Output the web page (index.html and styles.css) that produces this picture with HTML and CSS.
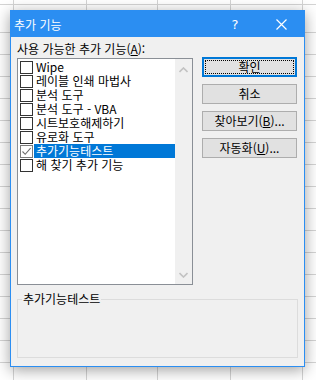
FILE: index.html
```html
<!DOCTYPE html>
<html lang="ko">
<head>
<meta charset="utf-8">
<link rel="stylesheet" href="styles.css">
</head>
<body>
<div class="sheet">
  <div class="dialog">
    <div class="titlebar">
      <span class="title">추가 기능</span>
      <span class="help">?</span>
      <span class="close"><svg width="11" height="11" viewBox="0 0 11 11"><path d="M0.5 0.5 L10.5 10.5 M10.5 0.5 L0.5 10.5" stroke="#fff" stroke-width="1.2" fill="none"/></svg></span>
    </div>
    <div class="body">
      <div class="main">
        <div class="left">
          <div class="caption">사용 가능한 추가 기능(<u>A</u>):</div>
          <div class="listbox">
            <div class="items">
              <div class="item"><span class="cb"></span><span class="lbl">Wipe</span></div>
              <div class="item"><span class="cb"></span><span class="lbl">레이블 인쇄 마법사</span></div>
              <div class="item"><span class="cb"></span><span class="lbl">분석 도구</span></div>
              <div class="item"><span class="cb"></span><span class="lbl">분석 도구 - VBA</span></div>
              <div class="item"><span class="cb"></span><span class="lbl">시트보호해제하기</span></div>
              <div class="item"><span class="cb"></span><span class="lbl">유로화 도구</span></div>
              <div class="item selected"><span class="cb checked"><svg width="11" height="11" viewBox="0 0 11 11"><path d="M1.5 5.5 L4.2 8.3 L9.6 2.2" stroke="#6d6d6d" stroke-width="1.1" fill="none"/></svg></span><span class="lbl">추가기능테스트</span></div>
              <div class="item"><span class="cb"></span><span class="lbl">해 찾기 추가 기능</span></div>
            </div>
            <div class="scrollbar">
              <svg class="arrow" width="9" height="6" viewBox="0 0 9 6"><path d="M0.5 5 L4.5 1 L8.5 5" stroke="#c2c2c2" stroke-width="1.6" fill="none"/></svg>
              <svg class="arrow" width="9" height="6" viewBox="0 0 9 6"><path d="M0.5 1 L4.5 5 L8.5 1" stroke="#c2c2c2" stroke-width="1.6" fill="none"/></svg>
            </div>
          </div>
        </div>
        <div class="buttons">
          <button class="btn default"><span class="focus">확인</span></button>
          <button class="btn">취소</button>
          <button class="btn">찾아보기(<u>B</u>)...</button>
          <button class="btn">자동화(<u>U</u>)...</button>
        </div>
      </div>
      <fieldset class="group">
        <legend>추가기능테스트</legend>
      </fieldset>
    </div>
  </div>
</div>
</body>
</html>
```

FILE: styles.css
```css
* { box-sizing: border-box; }
html, body {
  margin: 0;
  padding: 0;
  width: 316px;
  height: 380px;
  overflow: hidden;
}
body {
  font-family: "Noto Sans CJK KR", "Noto Sans", sans-serif;
  font-size: 12px;
  color: #000;
}
.sheet {
  width: 316px;
  height: 380px;
  padding: 10px 0 0 10px;
  background-color: #fff;
  background-image:
    repeating-linear-gradient(to bottom, transparent 0, transparent 21px, #d4d4d4 21px, #d4d4d4 22px),
    repeating-linear-gradient(to right, transparent 0, transparent 13px, #d4d4d4 13px, #d4d4d4 14px, transparent 14px, transparent 86px, #d4d4d4 86px, #d4d4d4 87px, transparent 87px, transparent 157px, #d4d4d4 157px, #d4d4d4 158px, transparent 158px, transparent 230px, #d4d4d4 230px, #d4d4d4 231px, transparent 231px, transparent 302px, #d4d4d4 302px, #d4d4d4 303px, transparent 303px);
  background-position: 0 11px, 0 0;
}
.dialog {
  width: 295px;
  height: 357px;
  border: 1px solid #2b8ef2;
  background: #f0f0f0;
  box-shadow: 0 3px 14px rgba(0,0,0,0.38);
  display: flex;
  flex-direction: column;
}
.titlebar {
  height: 26px;
  background: #2b8ef2;
  color: #fff;
  display: flex;
  align-items: center;
  padding-left: 3px;
  flex-shrink: 0;
}
.title {
  flex: 1;
  font-size: 12px;
  line-height: 16px;
  margin-top: 1px;
}
.help {
  font-size: 13px;
  width: 10px;
  margin-right: 36px;
  text-align: center;
  font-family: "DejaVu Sans", sans-serif;
}
.close {
  width: 11px;
  height: 11px;
  margin-right: 17px;
  display: flex;
}
.body {
  flex: 1;
  padding: 0 7px 8px 6px;
  display: flex;
  flex-direction: column;
}
.main {
  display: flex;
  justify-content: space-between;
}
.left {
  width: 176px;
}
.caption {
  height: 21px;
  line-height: 15px;
  padding-top: 4px;
  white-space: nowrap;
}
.listbox {
  height: 227px;
  border: 1px solid #8a8f96;
  background: #fff;
  display: flex;
}
.items {
  flex: 1;
  padding-top: 1px;
}
.item {
  display: flex;
  align-items: center;
  height: 14px;
  padding-left: 2px;
}
.cb {
  width: 13px;
  height: 13px;
  border: 1px solid #333;
  background: #fff;
  flex-shrink: 0;
  display: flex;
  align-items: center;
  justify-content: center;
}
.cb.checked {
  border-color: #7a7a7a;
}
.lbl {
  margin-left: 1px;
  padding-left: 2px;
  line-height: 14px;
  height: 14px;
  flex: 1;
  white-space: nowrap;
}
.selected .lbl {
  background: #0078d7;
  color: #fff;
}
.scrollbar {
  width: 17px;
  background: #f0f0f0;
  display: flex;
  flex-direction: column;
  justify-content: space-between;
  align-items: center;
  padding: 8px 0 6px;
}
.buttons {
  width: 95px;
  padding-top: 20px;
  display: flex;
  flex-direction: column;
  gap: 7px;
}
.btn {
  height: 20px;
  width: 95px;
  border: 1px solid #adadad;
  background: #e1e1e1;
  font-family: "Noto Sans CJK KR", "Noto Sans", sans-serif;
  font-size: 12px;
  line-height: 16px;
  padding: 0;
  color: #000;
}
.btn.default {
  border: 2px solid #0078d7;
  padding: 1px;
  display: flex;
}
.focus {
  flex: 1;
  border: 1px dotted #000;
  line-height: 12px;
  display: flex;
  align-items: center;
  justify-content: center;
}
.group {
  margin: 7px 0 0 0;
  border: 1px solid #dcdcdc;
  padding: 0;
  flex: 1;
  min-width: 0;
  width: 281px;
}
.group legend {
  margin-left: 4px;
  padding: 0 1px;
  line-height: 14px;
}
```
